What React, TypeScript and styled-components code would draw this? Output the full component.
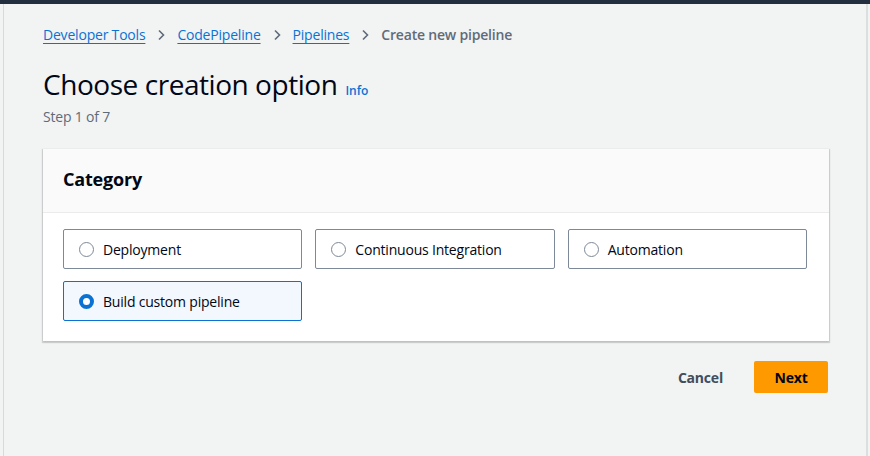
import React, { useState } from "react";
import styled, { createGlobalStyle } from "styled-components";

const Global = createGlobalStyle`
  html, body { margin: 0; padding: 0; background: #f2f3f3; }
  body { font-family: "Open Sans", "Noto Sans", Arial, sans-serif; color: #000716; }
  * { box-sizing: border-box; }
`;

const TopBar = styled.div`
  height: 4px;
  background: #232f3e;
`;

const Frame = styled.div`
  display: flex;
  height: 452px;
  background: #f2f3f3;
`;

const Gutter = styled.div<{ $w: number }>`
  width: ${(p) => p.$w}px;
  flex: none;
`;

const Main = styled.main`
  flex: 1;
  border-left: 1px solid #d5dbdb;
  border-right: 2px solid #dcdfe0;
  padding: 21px 37px 0 39px;
`;

const Crumbs = styled.nav`
  display: flex;
  align-items: center;
  gap: 10px;
  font-size: 14px;
  line-height: 20px;
  letter-spacing: -0.2px;
`;

const Crumb = styled.a`
  color: #0972d3;
  text-decoration: underline;
  text-underline-offset: 3px;
  cursor: pointer;
`;

const Current = styled.span`
  color: #5f6b7a;
  font-weight: 600;
`;

const Chevron = () => (
  <svg width="12" height="12" viewBox="0 0 12 12" fill="none">
    <path d="M4 1.5 8.5 6 4 10.5" stroke="#5f6b7a" strokeWidth="1.6" />
  </svg>
);

const TitleRow = styled.div`
  display: flex;
  align-items: baseline;
  gap: 8px;
  margin-top: 21px;
`;

const Title = styled.h1`
  margin: 0;
  font-size: 28px;
  line-height: 36px;
  font-weight: 400;
  letter-spacing: -0.45px;
  color: #000716;
`;

const Info = styled.a`
  font-size: 12px;
  font-weight: 600;
  color: #0972d3;
`;

const Step = styled.div`
  margin-top: 5px;
  font-size: 14px;
  letter-spacing: -0.2px;
  color: #5f6b7a;
`;

const Card = styled.section`
  margin-top: 23px;
  background: #ffffff;
  box-shadow: 0 1px 1px 1px rgba(0, 7, 22, 0.12), 0 1px 2px rgba(0, 7, 22, 0.15);
`;

const CardHeader = styled.header`
  height: 64px;
  display: flex;
  align-items: center;
  padding: 0 20px 3px;
  background: #fafafa;
  border-bottom: 1px solid #e9ebed;
`;

const CardTitle = styled.h2`
  margin: 0;
  font-size: 18px;
  font-weight: 700;
  letter-spacing: -0.2px;
`;

const Options = styled.div`
  display: grid;
  grid-template-columns: repeat(3, 1fr);
  gap: 12px 13px;
  padding: 16px 22px 20px 20px;
`;

const Option = styled.label<{ $selected: boolean }>`
  height: 40px;
  display: flex;
  align-items: center;
  gap: 9px;
  padding: 0 15px;
  border: 1px solid ${(p) => (p.$selected ? "#0972d3" : "#7d8998")};
  background: ${(p) => (p.$selected ? "#f2f8fd" : "#ffffff")};
  border-radius: 2px;
  font-size: 14px;
  letter-spacing: -0.2px;
  color: #000716;
  cursor: pointer;
`;

const Radio = styled.span<{ $on: boolean }>`
  width: 15px;
  height: 15px;
  border-radius: 50%;
  flex: none;
  border: ${(p) => (p.$on ? "4px solid #0972d3" : "1px solid #7d8998")};
  background: #fff;
`;

const Actions = styled.div`
  display: flex;
  justify-content: flex-end;
  align-items: center;
  gap: 31px;
  margin-top: 20px;
  padding-right: 1px;
`;

const Cancel = styled.button`
  border: none;
  background: transparent;
  font-family: inherit;
  font-size: 14px;
  font-weight: 700;
  letter-spacing: -0.2px;
  color: #414d5c;
  padding: 0;
`;

const Next = styled.button`
  width: 74px;
  height: 32px;
  border: none;
  border-radius: 2px;
  background: #ff9900;
  font-family: inherit;
  font-size: 14px;
  font-weight: 700;
  letter-spacing: -0.2px;
  color: #000716;
`;

const options = ["Deployment", "Continuous Integration", "Automation", "Build custom pipeline"];

export default function App() {
  const [sel, setSel] = useState("Build custom pipeline");
  return (
    <>
      <Global />
      <TopBar />
      <Frame>
        <Gutter $w={3} />
        <Main>
          <Crumbs>
            <Crumb>Developer Tools</Crumb>
            <Chevron />
            <Crumb>CodePipeline</Crumb>
            <Chevron />
            <Crumb>Pipelines</Crumb>
            <Chevron />
            <Current>Create new pipeline</Current>
          </Crumbs>
          <TitleRow>
            <Title>Choose creation option</Title>
            <Info>Info</Info>
          </TitleRow>
          <Step>Step 1 of 7</Step>
          <Card>
            <CardHeader>
              <CardTitle>Category</CardTitle>
            </CardHeader>
            <Options>
              {options.map((o) => (
                <Option key={o} $selected={sel === o} onClick={() => setSel(o)}>
                  <Radio $on={sel === o} />
                  {o}
                </Option>
              ))}
            </Options>
          </Card>
          <Actions>
            <Cancel>Cancel</Cancel>
            <Next>Next</Next>
          </Actions>
        </Main>
        <Gutter $w={2} />
      </Frame>
    </>
  );
}
